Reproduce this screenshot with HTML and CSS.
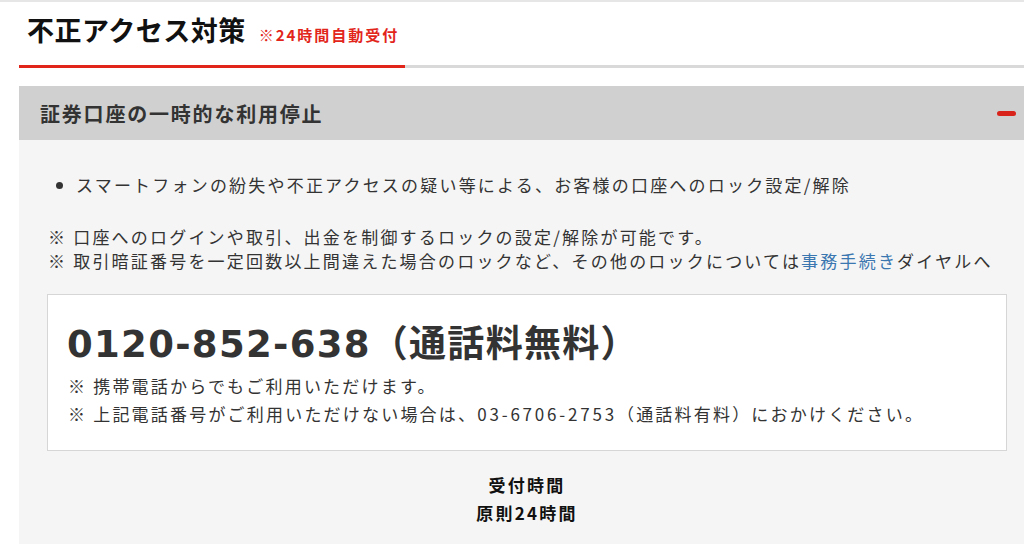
FILE: index.html
```html
<!DOCTYPE html>
<html lang="ja">
<head>
  <meta charset="UTF-8">
  <title>不正アクセス対策</title>
  <link rel="stylesheet" href="styles.css">
</head>
<body>
<div class="topline"></div>

<div class="page">
  <div class="section-head">
    <h2 class="section-title">不正アクセス対策<span class="badge">※24時間自動受付</span></h2>
  </div>

  <div class="acc">
    <div class="acc-head">
      <h3 class="acc-title">証券口座の一時的な利用停止</h3>
      <span class="acc-minus"></span>
    </div>

    <div class="acc-body">
      <ul class="dot-list">
        <li>スマートフォンの紛失や不正アクセスの疑い等による、お客様の口座へのロック設定/解除</li>
      </ul>

      <p class="note">※ 口座へのログインや取引、出金を制御するロックの設定/解除が可能です。</p>
      <p class="note">※ 取引暗証番号を一定回数以上間違えた場合のロックなど、その他のロックについては<a href="#" class="link">事務手続き</a>ダイヤルへ</p>

      <div class="tel-box">
        <p class="tel"><span class="tel-num">0120-852-638</span>（通話料無料）</p>
        <p class="note">※ 携帯電話からでもご利用いただけます。</p>
        <p class="note">※ 上記電話番号がご利用いただけない場合は、<span class="num">03-6706-2753</span>（通話料有料）におかけください。</p>
      </div>

      <div class="hours">
        <p>受付時間</p>
        <p>原則24時間</p>
      </div>
    </div>
  </div>
</div>
</body>
</html>
```

FILE: styles.css
```css
* {
  margin: 0;
  padding: 0;
}

html,
body {
  background-color: #fff;
}

body {
  font-family: "Noto Sans CJK JP", "Noto Sans", sans-serif;
  color: #333;
}

.topline {
  height: 2px;
  background-color: #e6e6e6;
}

.page {
  padding-left: 19px;
}

/* 見出し：赤い下線は左だけ、残りはグレー */
.section-head {
  border-bottom: 3px solid #d9d9d9;
}

.section-title {
  width: 386px;
  box-sizing: border-box;
  padding: 12px 0 14px 8px;
  margin-bottom: -3px;
  border-bottom: 3px solid #e2251b;
  font-size: 27px;
  letter-spacing: 0.5px;
  line-height: 32px;
  font-weight: bold;
  color: #111;
  display: flex;
  align-items: baseline;
}

.badge {
  margin-left: 13px;
  font-size: 15px;
  letter-spacing: 2px;
  font-weight: bold;
  color: #e2251b;
}

.acc {
  margin-top: 18px;
}

.acc-head {
  height: 54px;
  background-color: #d0d0d0;
  display: flex;
  align-items: center;
  justify-content: space-between;
  padding: 0 8px 0 21px;
}

.acc-title {
  font-size: 20px;
  letter-spacing: 1.8px;
  font-weight: bold;
  color: #333;
}

.acc-minus {
  width: 19px;
  height: 5px;
  border-radius: 3px;
  background-color: #d8231b;
}

.acc-body {
  background-color: #f5f5f5;
  padding: 30px 17px 20px 28px;
  font-size: 17px;
  letter-spacing: 2.2px;
}

.dot-list {
  padding-left: 29px;
  line-height: 30px;
  margin-bottom: 25px;
}

.note {
  line-height: 24px;
  padding-left: 1px;
}

.link {
  color: #3a76b0;
  text-decoration: none;
}

.tel-box {
  margin-top: 21px;
  background-color: #fff;
  border: 1px solid #d6d6d6;
  padding: 20px 20px 22px 19px;
}

.tel-box .note {
  line-height: 28px;
}

.tel {
  font-size: 37px;
  line-height: 52px;
  font-weight: bold;
  letter-spacing: 1.3px;
  color: #333;
  margin-bottom: 1px;
}

.tel-num {
  font-family: "DejaVu Sans", sans-serif;
  letter-spacing: 1.3px;
}

.num {
  letter-spacing: 2.8px;
}

.hours {
  margin-top: 20px;
  text-align: center;
  font-weight: bold;
  line-height: 28px;
  color: #111;
}
```
